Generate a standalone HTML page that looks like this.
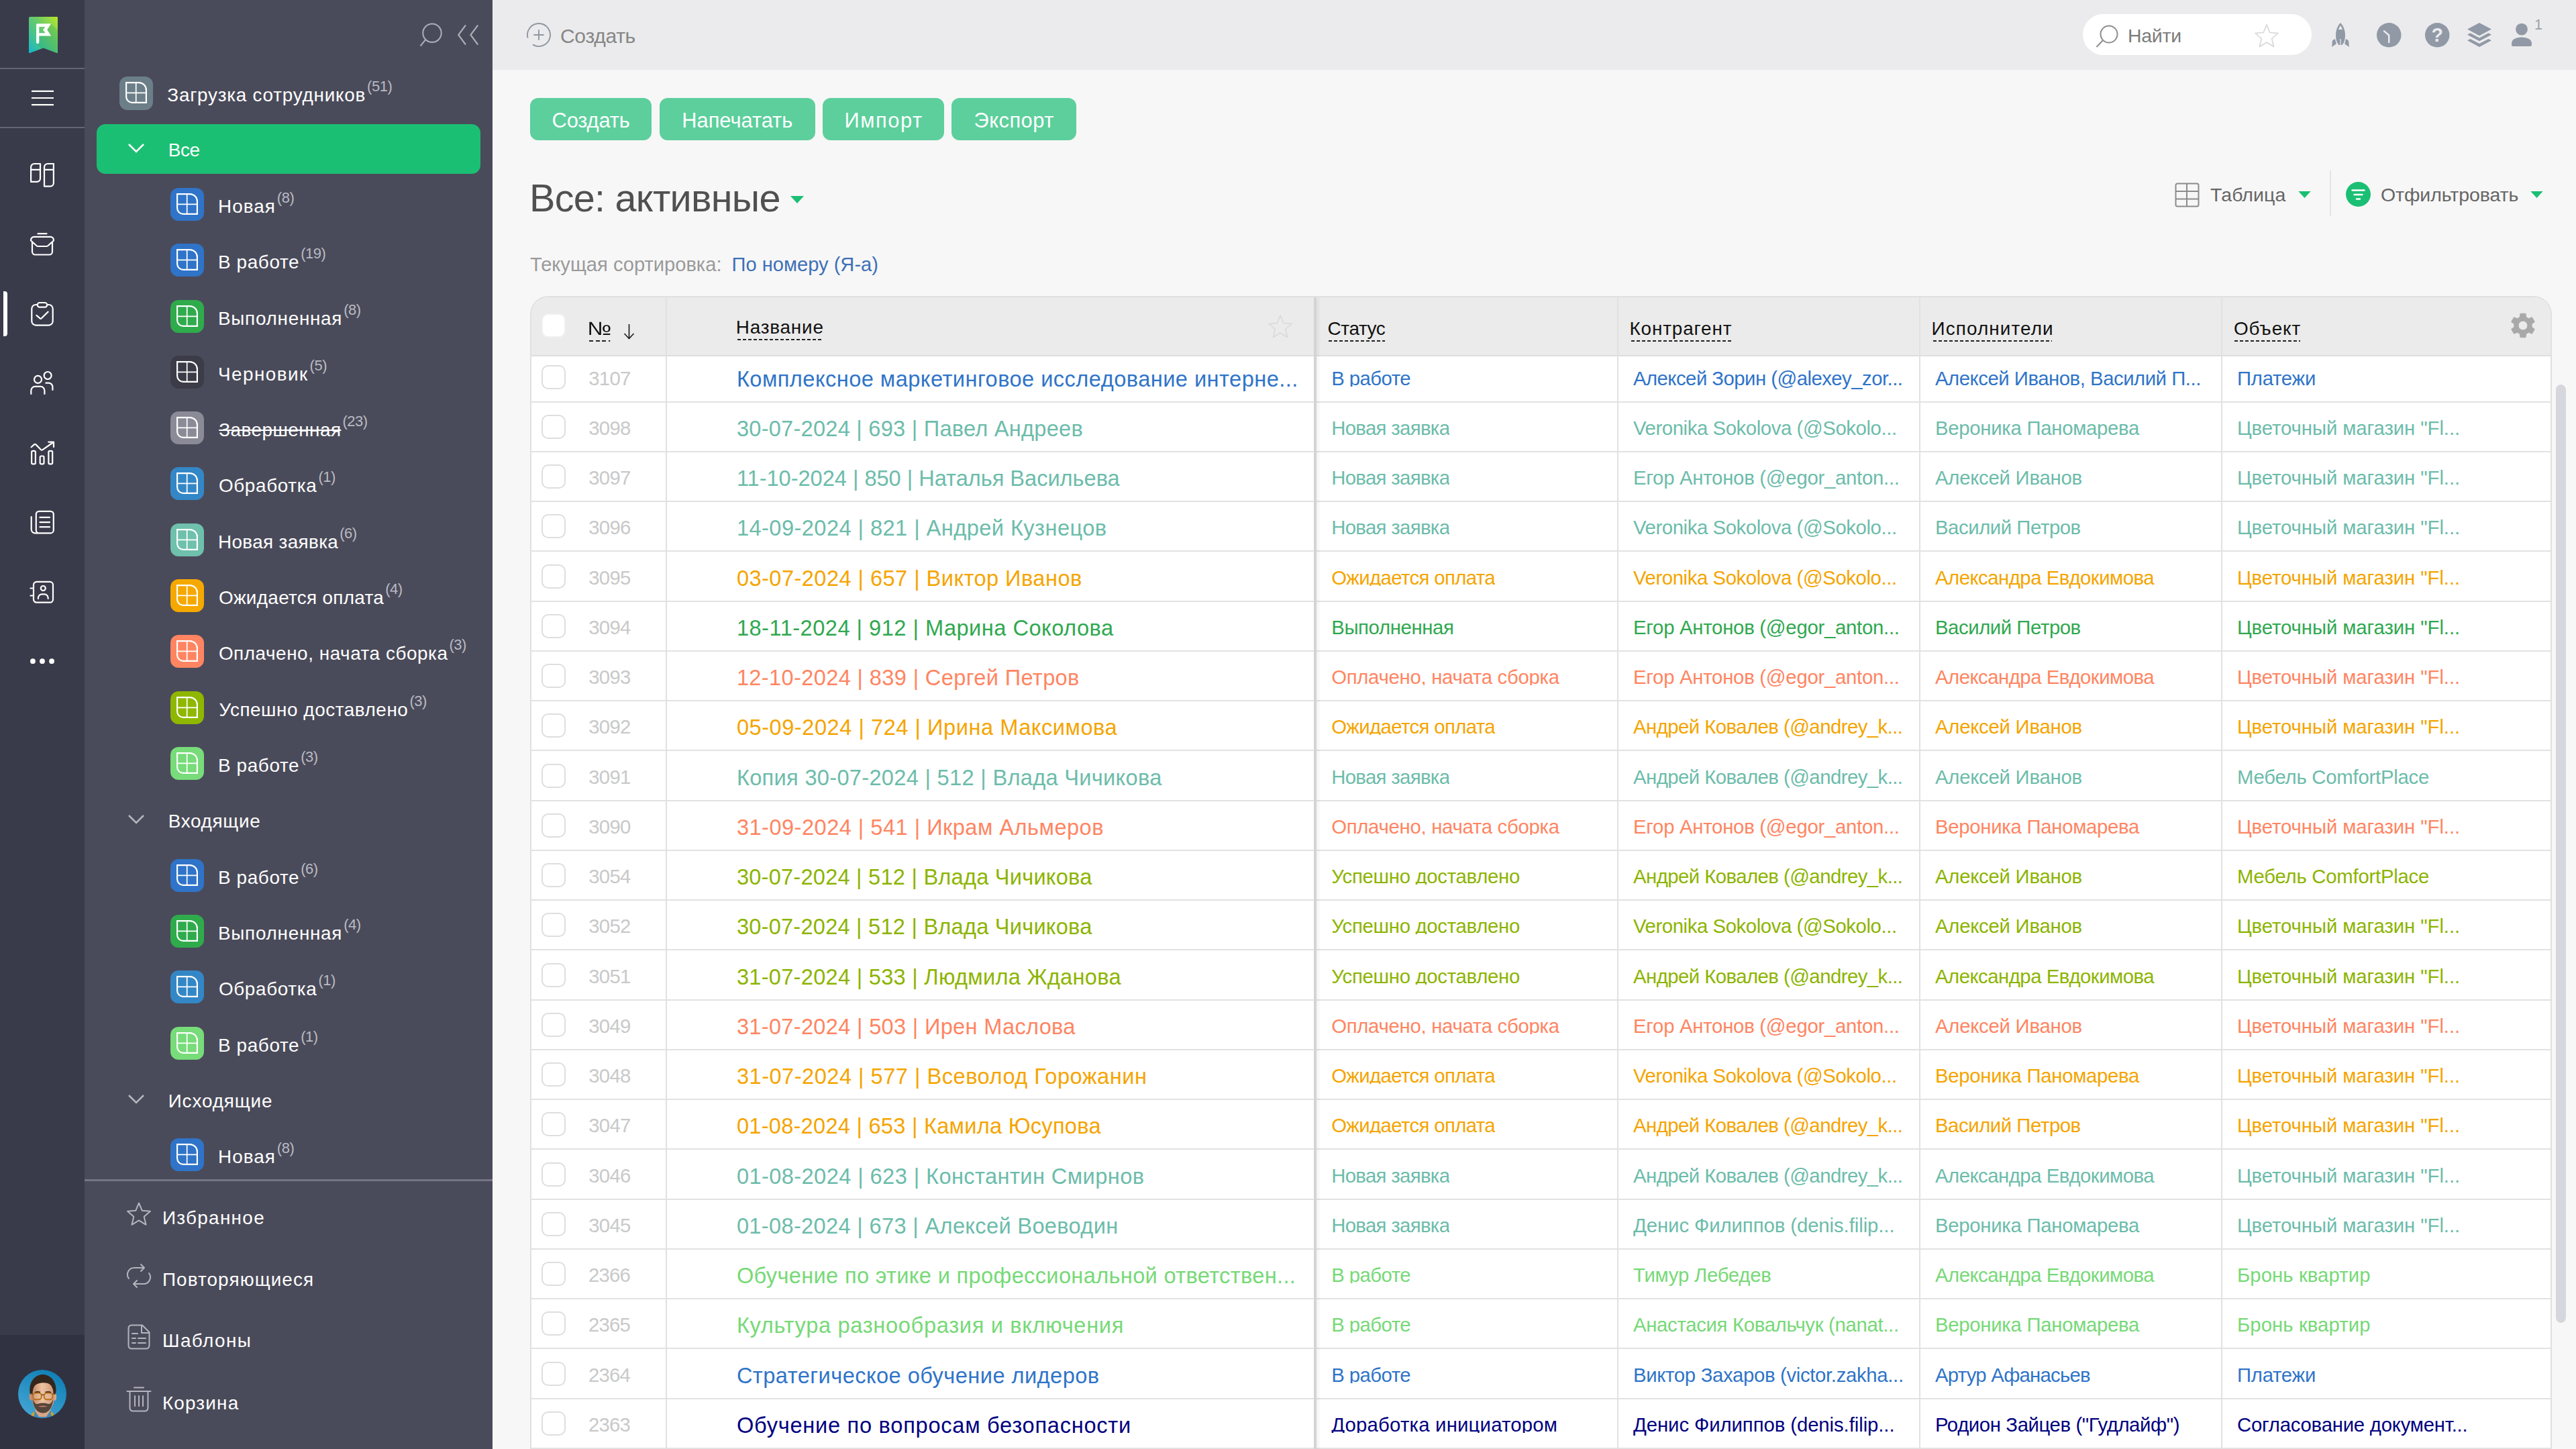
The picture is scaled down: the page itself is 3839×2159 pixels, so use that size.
<!DOCTYPE html>
<html lang="ru"><head><meta charset="utf-8"><title>Все: активные</title>
<style>
*{box-sizing:border-box;margin:0;padding:0}
html,body{width:3839px;height:2159px;overflow:hidden;background:#f7f7f7}
body{font-family:"Liberation Sans",sans-serif;position:relative;color:#444}
.abs{position:absolute}
#rail{position:absolute;left:0;top:0;width:126px;height:2159px;background:#3a3b4a}
#railb{position:absolute;left:0;top:1989px;width:126px;height:170px;background:#303241}
.rsep{position:absolute;left:0;width:126px;height:2px;background:#656675}
#side{position:absolute;left:126px;top:0;width:608px;height:2159px;background:#4a4b5a}
#side .sep{position:absolute;left:0;top:1757px;width:608px;height:3px;background:#757585}
.si{position:absolute;left:0;width:608px;height:50px;color:#fff;font-size:27.900px;line-height:50px;white-space:nowrap;letter-spacing:.4px}
.si .ib{position:absolute;left:128px;top:0;width:50px;height:49px;border-radius:12px}
.si .gi{position:absolute;left:9px;top:8px;width:32px;height:32px}
.si .t{position:absolute;left:201px;top:3px}
.si .t sup,.top .t sup{font-size:22px;color:#b9bac3;position:relative;top:-1px;left:2px;letter-spacing:-.5px;vertical-align:baseline;display:inline-block;transform:translateY(-14px)}
.si.g .t{left:127px}
.si .chev{position:absolute;left:65px;top:18px;width:24px;height:14px;color:#b4b5be}
.si.s .t span{text-decoration:line-through}
#act{position:absolute;left:18px;top:185px;width:572px;height:74px;border-radius:13px;background:#1bbf73}
.top{position:absolute;left:0;width:608px;height:50px;color:#fff;font-size:27.900px;line-height:50px;white-space:nowrap;letter-spacing:.4px}
.bi{position:absolute;left:0;width:608px;height:50px;color:#fff;font-size:27.900px;line-height:50px;white-space:nowrap;letter-spacing:.8px}
.bi .t{position:absolute;left:118px;top:1.500px}
.bi svg{position:absolute;left:62px;top:2px;width:38px;height:38px}
#topbar{position:absolute;left:734px;top:0;width:3105px;height:104px;background:#ebebed}
.btn{position:absolute;top:146px;height:63px;border-radius:12px;background:#5ccf9c;color:#fff;font-size:30.800px;line-height:67px;text-align:center;white-space:nowrap;letter-spacing:-.45px}
#title{position:absolute;left:789px;top:263px;font-size:57.500px;line-height:64px;color:#505050;white-space:nowrap;letter-spacing:-.7px}
#sort{position:absolute;left:790px;top:376px;font-size:29.100px;line-height:36px;color:#9a9a9a;white-space:nowrap;letter-spacing:0}
#sort b{font-weight:normal;color:#3d70b8;margin-left:7px}
#tbl{position:absolute;left:790px;top:441px;width:3013px;height:1718px;background:#fff;border:2px solid #e0e0e0;border-bottom:none;border-radius:27px 27px 0 0;overflow:hidden}
#thead{position:absolute;left:0;top:0;width:3011px;height:88px;background:#ebebeb;border-bottom:2px solid #dedede}
.th{position:absolute;top:27px;font-size:27.900px;line-height:36px;color:#111;white-space:nowrap;letter-spacing:.5px;height:37px;background:repeating-linear-gradient(90deg,#222 0,#222 5px,transparent 5px,transparent 8px) left bottom/100% 2px no-repeat}
.vl{position:absolute;top:0;width:2px;height:1718px;background:#e1e1e1}
.r{position:absolute;left:0;width:3011px;height:74px;white-space:nowrap}
.hl{position:absolute;left:0;width:3011px;height:2px;background:#e2e2e2}
.r span{position:absolute;top:2px;line-height:74px;font-size:29.300px;letter-spacing:-.45px}
.r .n{left:85px;color:#c9c9c9;letter-spacing:-.7px}
.r .a{left:306px;top:3px;font-size:32.600px;letter-spacing:.4px}
.r .b{left:1192px;letter-spacing:-.6px;height:49px;overflow:hidden}
.r .c{left:1642px;letter-spacing:-.6px}
.r .d{left:2092px}
.r .e{left:2543px}
.cb{position:absolute;left:15px;width:36px;height:36px;border:2px solid #dedede;border-radius:10px;background:#fff}
</style></head><body>

<div id="rail"><div id="railb"></div><div class="rsep" style="top:101px"></div><div class="rsep" style="top:189px"></div>
<svg class="abs" style="left:42.700px;top:24.800px;width:43.300px;height:54.300px" viewBox="0 0 43.300 54.300">
<defs><linearGradient id="lg" x1="1" y1="0" x2="0" y2="1"><stop offset="0" stop-color="#b8e82a"/><stop offset=".4" stop-color="#6ccb66"/><stop offset=".75" stop-color="#3bc19a"/><stop offset="1" stop-color="#12b6d0"/></linearGradient>
<clipPath id="lc"><path d="M1.800 0H41.500A1.800 1.800 0 0 1 43.300 1.800V53.300Q43.300 54.600 42 54.100L21.600 46.400L1.300 54.100Q0 54.600 0 53.300V1.800A1.800 1.800 0 0 1 1.800 0Z"/></clipPath></defs>
<g clip-path="url(#lc)"><rect width="43.300" height="54.300" fill="url(#lg)"/>
<path d="M33.200 10.250L43.300 20.350V60H31L11.500 40.500L15.300 38V28.400H33.200L27.300 19.250Z" fill="#1a9a6a" fill-opacity=".22"/></g>
<path d="M12.600 10.250H33.200L27.300 19.300L33.200 28.400H15.300V38.100A2.120 2.120 0 0 1 11.060 38.100V11.800A1.550 1.550 0 0 1 12.600 10.250Z M15.300 14.900V24.200H24.500L21 19.300L24.500 14.900Z" fill="#fff" fill-rule="evenodd"/>
</svg>
<svg class="abs" style="left:46.500px;top:134px;width:33px;height:24px" viewBox="0 0 34 24"><path d="M0 1.5H34M0 12H34M0 22.5H34" stroke="#fff" stroke-width="2.2" fill="none"/></svg>
<div class="abs" style="left:5px;top:434px;width:6px;height:67px;background:#fff;border-radius:0 4px 4px 0"></div>
<svg class="abs" style="left:44px;top:242px;width:38px;height:38px" viewBox="0 0 38 38"><path d="M2.100 28.900V7A5 5 0 0 1 7.100 2H16V23.900A5 5 0 0 1 11 28.900Z M2.100 10.900H16 M22 35.600V7A5 5 0 0 1 27 2H35.900V30.600A5 5 0 0 1 30.900 35.600Z M22 10.900H35.900" fill="none" stroke="#fff" stroke-width="2.2" stroke-linejoin="round" stroke-linecap="round"/></svg>
<svg class="abs" style="left:44px;top:346px;width:38px;height:36px" viewBox="0 0 38 36"><path d="M12.500 2.200H25.500 M2.100 12.500V11.400A4.500 4.500 0 0 1 6.600 6.900H31.400A4.500 4.500 0 0 1 35.900 11.400V12.500L27.400 20.200Q26.500 21 25.300 21H12.700Q11.500 21 10.600 20.200Z M4 14.500V29A4.500 4.500 0 0 0 8.500 33.500H29.500A4.500 4.500 0 0 0 34 29V14.500" fill="none" stroke="#fff" stroke-width="2.2" stroke-linejoin="round" stroke-linecap="round"/></svg>
<svg class="abs" style="left:45px;top:449px;width:36px;height:38px" viewBox="0 0 36 38"><path d="M10.700 5H8.300A6 6 0 0 0 2.300 11V29.600A6 6 0 0 0 8.300 35.600H27.700A6 6 0 0 0 33.700 29.600V11A6 6 0 0 0 27.700 5H25.200 M9.400 20.900L14.600 25.400Q15.700 26.300 16.800 25.300L26.600 15.600" fill="none" stroke="#fff" stroke-width="2.2" stroke-linejoin="round" stroke-linecap="round"/><rect x="10.700" y="2" width="14.500" height="6.600" rx="3.300" fill="none" stroke="#fff" stroke-width="2.2" stroke-linejoin="round" stroke-linecap="round"/></svg>
<svg class="abs" style="left:44px;top:552px;width:38px;height:37px" viewBox="0 0 38 37"><circle cx="12.500" cy="13.400" r="5.500" fill="none" stroke="#fff" stroke-width="2.2" stroke-linejoin="round" stroke-linecap="round"/><circle cx="27.100" cy="7.500" r="5.500" fill="none" stroke="#fff" stroke-width="2.2" stroke-linejoin="round" stroke-linecap="round"/><path d="M2.300 35.700V29.900A6 6 0 0 1 8.300 23.900H16.400A6 6 0 0 1 22.400 29.900V35.700 M23.500 18.600H28.400A6 6 0 0 1 34.400 24.600V29.800" fill="none" stroke="#fff" stroke-width="2.200" stroke-linejoin="round" stroke-linecap="butt"/></svg>
<svg class="abs" style="left:44px;top:656px;width:38px;height:38px" viewBox="0 0 38 38"><path d="M2.600 10.200L6.800 6.400Q8.300 5.200 9.700 6.600L17.200 14.200Q18.300 15.200 19.500 14.200L35.500 3 M28.300 2.600H36V10" fill="none" stroke="#fff" stroke-width="2.2" stroke-linejoin="round" stroke-linecap="round"/><rect x="3.100" y="15.800" width="5.800" height="19.500" rx="1.800" fill="none" stroke="#fff" stroke-width="2.2" stroke-linejoin="round" stroke-linecap="round"/><rect x="15.700" y="23.500" width="5.800" height="11.800" rx="1.800" fill="none" stroke="#fff" stroke-width="2.2" stroke-linejoin="round" stroke-linecap="round"/><rect x="28.400" y="15.800" width="5.800" height="19.500" rx="1.800" fill="none" stroke="#fff" stroke-width="2.2" stroke-linejoin="round" stroke-linecap="round"/></svg>
<svg class="abs" style="left:44px;top:759px;width:38px;height:38px" viewBox="0 0 38 38"><path d="M14.300 2.800H31.300A4.500 4.500 0 0 1 35.800 7.300V30.900A4.500 4.500 0 0 1 31.300 35.400H14.300A4.500 4.500 0 0 1 9.800 30.900V7.300A4.500 4.500 0 0 1 14.300 2.800Z M15.500 11.900H30 M15.500 19.100H30 M15.500 26.200H30 M2.700 11V30A5.400 5.400 0 0 0 8.100 35.400H14.300" fill="none" stroke="#fff" stroke-width="2.2" stroke-linejoin="round" stroke-linecap="round"/></svg>
<svg class="abs" style="left:44px;top:864px;width:38px;height:37px" viewBox="0 0 38 37"><path d="M10.500 2.900H30.500A4.500 4.500 0 0 1 35 7.400V29.200A4.500 4.500 0 0 1 30.500 33.700H10.500A4.500 4.500 0 0 1 6 29.200V7.400A4.500 4.500 0 0 1 10.500 2.900Z M1.500 12.500H6 M1.500 23.500H6 M12.900 28V27A5.700 5.700 0 0 1 18.600 21.300H22A5.700 5.700 0 0 1 27.700 27V28" fill="none" stroke="#fff" stroke-width="2.2" stroke-linejoin="round" stroke-linecap="round"/><circle cx="20.300" cy="12.500" r="3.500" fill="none" stroke="#fff" stroke-width="2.2" stroke-linejoin="round" stroke-linecap="round"/></svg>
<svg class="abs" style="left:44px;top:979px;width:38px;height:12px" viewBox="0 0 38 12"><circle cx="4.900" cy="6.200" r="3.900" fill="#fff"/><circle cx="19" cy="6.200" r="3.900" fill="#fff"/><circle cx="33.100" cy="6.200" r="3.900" fill="#fff"/></svg>
<svg class="abs" style="left:27px;top:2041px;width:72px;height:72px" viewBox="0 0 72 72"><defs><clipPath id="av"><circle cx="36" cy="36" r="36"/></clipPath>
<linearGradient id="avb" x1=".7" y1="0" x2=".2" y2="1"><stop offset="0" stop-color="#0f7fb4"/><stop offset="1" stop-color="#46a6d6"/></linearGradient>
<linearGradient id="avs" x1="0" y1="0" x2="1" y2="0"><stop offset="0" stop-color="#c08462"/><stop offset=".45" stop-color="#eec3a1"/><stop offset="1" stop-color="#cf9672"/></linearGradient>
<filter id="avf" x="-10%" y="-10%" width="120%" height="120%"><feGaussianBlur stdDeviation=".7"/></filter></defs>
<g clip-path="url(#av)"><rect width="72" height="72" fill="url(#avb)"/>
<g filter="url(#avf)">
<path d="M19 72L23 64L27 60H46L50 63L54 72Z" fill="#3f86bd"/>
<path d="M19.500 67L23.500 62L24.500 66L22 72H18Z M53 66L49.500 61.500L48.500 65L51 72H55Z" fill="#d9a11f"/>
<path d="M25.500 52H48.500V60L42 70H31L25.500 62Z" fill="#d7a585"/>
<ellipse cx="18.800" cy="40.500" rx="2.300" ry="5.500" fill="#c98d6c"/><ellipse cx="54.800" cy="40.500" rx="2.300" ry="5.500" fill="#dba686"/>
<path d="M21 30C21 18 28 13 37 13S53 19 53.500 30V44C53.500 55 45 64 37 64S21 55 21 44Z" fill="url(#avs)"/>
<path d="M18 36C15 22 22 8 36 7C47 6.500 56 16 56.500 28C56.800 32 56 35 55 37L52.500 36C53 29 50 22 44 20C38 18.500 30 19 25.500 23C22.500 26 21.500 31 21.500 36Z" fill="#35261f"/>
<path d="M22 44C22 52 26 64 37 64.500C47 64.500 52 53 52 44C50 50 47 52 44 50.500C41 49 33 49 30 50.500C27 52 24 50 22 44Z" fill="#54443b"/>
<path d="M29.500 54.500Q37 52.500 44 54.500Q37 56.500 29.500 54.500Z" fill="#c77b6a"/>
<rect x="22.200" y="34.500" width="12.600" height="9.800" rx="4.200" fill="#f1c9a4" fill-opacity=".35" stroke="#b8701f" stroke-width="1.900"/><rect x="38.800" y="34.500" width="12.600" height="9.800" rx="4.200" fill="#f1c9a4" fill-opacity=".35" stroke="#b8701f" stroke-width="1.900"/><path d="M34.800 37.500Q36.800 36.300 38.800 37.500 M22.200 36.500L19 35.500 M51.400 36.500L54.500 35.500" stroke="#8a4f1a" stroke-width="1.500" fill="none"/>
<path d="M25 33.600Q29 32 33 33.400 M40.500 33.400Q45 32 49 33.600" stroke="#2f221c" stroke-width="1.400" fill="none"/>
</g></g></svg>
</div>
<div id="side">
<svg class="abs" style="left:498px;top:33px;width:36px;height:38px" viewBox="0 0 36 38"><circle cx="20" cy="16.200" r="13.700" fill="none" stroke="#abacb5" stroke-width="2.100"/><path d="M10.300 25.900L2.600 35.500" stroke="#abacb5" stroke-width="2.100" fill="none"/></svg>
<svg class="abs" style="left:555px;top:36px;width:33px;height:32px" viewBox="0 0 33 32"><path d="M13 1.500L2.200 16L13 30.500M31.200 1.500L20.400 16L31.200 30.500" fill="none" stroke="#abacb5" stroke-width="2.100" stroke-linejoin="round"/></svg>
<div id="act"></div>
<div class="top" style="top:114px"><div class="abs" style="left:52px;top:0;width:50px;height:50px;border-radius:12px;background:#6c7f88"><svg class="abs" style="left:9px;top:8px;width:32px;height:32px" viewBox="0 0 32 32"><path d="M1.100 1.100H20A10.900 10.900 0 0 1 30.900 12V30.900H10A8.900 8.900 0 0 1 1.100 22Z" fill="none" stroke="#fff" stroke-width="2.200"/><path d="M15.700 1V31 M1 16.300H31" fill="none" stroke="#fff" stroke-width="1.700"/></svg></div><span class="t abs" style="left:123.3px;top:3px;letter-spacing:0.75px">Загрузка сотрудников<sup>(51)</sup></span></div>
<div class="si g" style="top:196px"><span style="color:#fff"><svg class="chev" style="color:#fff" viewBox="0 0 24 14"><path d="M1 1L12 12L23 1" fill="none" stroke="currentColor" stroke-width="2.6"/></svg></span><span class="t" style="left:124.8px;letter-spacing:-0.42px">Все</span></div>
<div class="si" style="top:280px"><div class="ib" style="background:#2f74c8"><svg class="gi" viewBox="0 0 32 32"><path d="M1.100 1.100H20A10.900 10.900 0 0 1 30.900 12V30.900H10A8.900 8.900 0 0 1 1.100 22Z" fill="none" stroke="#fff" stroke-width="2.200"/><path d="M15.700 1V31 M1 16.300H31" fill="none" stroke="#fff" stroke-width="1.700"/></svg></div><span class="t" style="left:199.0px;letter-spacing:1.01px"><span>Новая</span><sup>(8)</sup></span></div>
<div class="si" style="top:363px"><div class="ib" style="background:#2f74c8"><svg class="gi" viewBox="0 0 32 32"><path d="M1.100 1.100H20A10.900 10.900 0 0 1 30.900 12V30.900H10A8.900 8.900 0 0 1 1.100 22Z" fill="none" stroke="#fff" stroke-width="2.200"/><path d="M15.700 1V31 M1 16.300H31" fill="none" stroke="#fff" stroke-width="1.700"/></svg></div><span class="t" style="left:199.0px;letter-spacing:0.62px"><span>В работе</span><sup>(19)</sup></span></div>
<div class="si" style="top:447px"><div class="ib" style="background:#2fab4c"><svg class="gi" viewBox="0 0 32 32"><path d="M1.100 1.100H20A10.900 10.900 0 0 1 30.900 12V30.900H10A8.900 8.900 0 0 1 1.100 22Z" fill="none" stroke="#fff" stroke-width="2.200"/><path d="M15.700 1V31 M1 16.300H31" fill="none" stroke="#fff" stroke-width="1.700"/></svg></div><span class="t" style="left:199.0px;letter-spacing:0.72px"><span>Выполненная</span><sup>(8)</sup></span></div>
<div class="si" style="top:530px"><div class="ib" style="background:#3b3c47"><svg class="gi" viewBox="0 0 32 32"><path d="M1.100 1.100H20A10.900 10.900 0 0 1 30.900 12V30.900H10A8.900 8.900 0 0 1 1.100 22Z" fill="none" stroke="#fff" stroke-width="2.200"/><path d="M15.700 1V31 M1 16.300H31" fill="none" stroke="#fff" stroke-width="1.700"/></svg></div><span class="t" style="left:199.0px;letter-spacing:1.43px"><span>Черновик</span><sup>(5)</sup></span></div>
<div class="si s" style="top:613px"><div class="ib" style="background:#8a8b96"><svg class="gi" viewBox="0 0 32 32"><path d="M1.100 1.100H20A10.900 10.900 0 0 1 30.900 12V30.900H10A8.900 8.900 0 0 1 1.100 22Z" fill="none" stroke="#fff" stroke-width="2.200"/><path d="M15.700 1V31 M1 16.300H31" fill="none" stroke="#fff" stroke-width="1.700"/></svg></div><span class="t" style="left:200.3px;letter-spacing:0.45px"><span>Завершенная</span><sup>(23)</sup></span></div>
<div class="si" style="top:696px"><div class="ib" style="background:#3487c6"><svg class="gi" viewBox="0 0 32 32"><path d="M1.100 1.100H20A10.900 10.900 0 0 1 30.900 12V30.900H10A8.900 8.900 0 0 1 1.100 22Z" fill="none" stroke="#fff" stroke-width="2.200"/><path d="M15.700 1V31 M1 16.300H31" fill="none" stroke="#fff" stroke-width="1.700"/></svg></div><span class="t" style="left:199.9px;letter-spacing:0.65px"><span>Обработка</span><sup>(1)</sup></span></div>
<div class="si" style="top:780px"><div class="ib" style="background:#6fc0ac"><svg class="gi" viewBox="0 0 32 32"><path d="M1.100 1.100H20A10.900 10.900 0 0 1 30.900 12V30.900H10A8.900 8.900 0 0 1 1.100 22Z" fill="none" stroke="#fff" stroke-width="2.200"/><path d="M15.700 1V31 M1 16.300H31" fill="none" stroke="#fff" stroke-width="1.700"/></svg></div><span class="t" style="left:199.0px;letter-spacing:0.34px"><span>Новая заявка</span><sup>(6)</sup></span></div>
<div class="si" style="top:863px"><div class="ib" style="background:#f5a800"><svg class="gi" viewBox="0 0 32 32"><path d="M1.100 1.100H20A10.900 10.900 0 0 1 30.900 12V30.900H10A8.900 8.900 0 0 1 1.100 22Z" fill="none" stroke="#fff" stroke-width="2.200"/><path d="M15.700 1V31 M1 16.300H31" fill="none" stroke="#fff" stroke-width="1.700"/></svg></div><span class="t" style="left:199.9px;letter-spacing:0.31px"><span>Ожидается оплата</span><sup>(4)</sup></span></div>
<div class="si" style="top:946px"><div class="ib" style="background:#ff8562"><svg class="gi" viewBox="0 0 32 32"><path d="M1.100 1.100H20A10.900 10.900 0 0 1 30.900 12V30.900H10A8.900 8.900 0 0 1 1.100 22Z" fill="none" stroke="#fff" stroke-width="2.200"/><path d="M15.700 1V31 M1 16.300H31" fill="none" stroke="#fff" stroke-width="1.700"/></svg></div><span class="t" style="left:199.9px;letter-spacing:0.54px"><span>Оплачено, начата сборка</span><sup>(3)</sup></span></div>
<div class="si" style="top:1030px"><div class="ib" style="background:#8fb700"><svg class="gi" viewBox="0 0 32 32"><path d="M1.100 1.100H20A10.900 10.900 0 0 1 30.900 12V30.900H10A8.900 8.900 0 0 1 1.100 22Z" fill="none" stroke="#fff" stroke-width="2.200"/><path d="M15.700 1V31 M1 16.300H31" fill="none" stroke="#fff" stroke-width="1.700"/></svg></div><span class="t" style="left:200.5px;letter-spacing:0.55px"><span>Успешно доставлено</span><sup>(3)</sup></span></div>
<div class="si" style="top:1113px"><div class="ib" style="background:#77dc79"><svg class="gi" viewBox="0 0 32 32"><path d="M1.100 1.100H20A10.900 10.900 0 0 1 30.900 12V30.900H10A8.900 8.900 0 0 1 1.100 22Z" fill="none" stroke="#fff" stroke-width="2.200"/><path d="M15.700 1V31 M1 16.300H31" fill="none" stroke="#fff" stroke-width="1.700"/></svg></div><span class="t" style="left:199.0px;letter-spacing:0.62px"><span>В работе</span><sup>(3)</sup></span></div>
<div class="si g" style="top:1196px"><svg class="chev" viewBox="0 0 24 14"><path d="M1 1L12 12L23 1" fill="none" stroke="currentColor" stroke-width="2.6"/></svg><span class="t" style="left:124.7px;letter-spacing:0.68px">Входящие</span></div>
<div class="si" style="top:1280px"><div class="ib" style="background:#2f74c8"><svg class="gi" viewBox="0 0 32 32"><path d="M1.100 1.100H20A10.900 10.900 0 0 1 30.900 12V30.900H10A8.900 8.900 0 0 1 1.100 22Z" fill="none" stroke="#fff" stroke-width="2.200"/><path d="M15.700 1V31 M1 16.300H31" fill="none" stroke="#fff" stroke-width="1.700"/></svg></div><span class="t" style="left:199.0px;letter-spacing:0.62px"><span>В работе</span><sup>(6)</sup></span></div>
<div class="si" style="top:1363px"><div class="ib" style="background:#2fab4c"><svg class="gi" viewBox="0 0 32 32"><path d="M1.100 1.100H20A10.900 10.900 0 0 1 30.900 12V30.900H10A8.900 8.900 0 0 1 1.100 22Z" fill="none" stroke="#fff" stroke-width="2.200"/><path d="M15.700 1V31 M1 16.300H31" fill="none" stroke="#fff" stroke-width="1.700"/></svg></div><span class="t" style="left:199.0px;letter-spacing:0.72px"><span>Выполненная</span><sup>(4)</sup></span></div>
<div class="si" style="top:1446px"><div class="ib" style="background:#3487c6"><svg class="gi" viewBox="0 0 32 32"><path d="M1.100 1.100H20A10.900 10.900 0 0 1 30.900 12V30.900H10A8.900 8.900 0 0 1 1.100 22Z" fill="none" stroke="#fff" stroke-width="2.200"/><path d="M15.700 1V31 M1 16.300H31" fill="none" stroke="#fff" stroke-width="1.700"/></svg></div><span class="t" style="left:199.9px;letter-spacing:0.65px"><span>Обработка</span><sup>(1)</sup></span></div>
<div class="si" style="top:1530px"><div class="ib" style="background:#77dc79"><svg class="gi" viewBox="0 0 32 32"><path d="M1.100 1.100H20A10.900 10.900 0 0 1 30.900 12V30.900H10A8.900 8.900 0 0 1 1.100 22Z" fill="none" stroke="#fff" stroke-width="2.200"/><path d="M15.700 1V31 M1 16.300H31" fill="none" stroke="#fff" stroke-width="1.700"/></svg></div><span class="t" style="left:199.0px;letter-spacing:0.62px"><span>В работе</span><sup>(1)</sup></span></div>
<div class="si g" style="top:1613px"><svg class="chev" viewBox="0 0 24 14"><path d="M1 1L12 12L23 1" fill="none" stroke="currentColor" stroke-width="2.6"/></svg><span class="t" style="left:124.7px;letter-spacing:0.87px">Исходящие</span></div>
<div class="si" style="top:1696px"><div class="ib" style="background:#2f74c8"><svg class="gi" viewBox="0 0 32 32"><path d="M1.100 1.100H20A10.900 10.900 0 0 1 30.900 12V30.900H10A8.900 8.900 0 0 1 1.100 22Z" fill="none" stroke="#fff" stroke-width="2.200"/><path d="M15.700 1V31 M1 16.300H31" fill="none" stroke="#fff" stroke-width="1.700"/></svg></div><span class="t" style="left:199.0px;letter-spacing:1.01px"><span>Новая</span><sup>(8)</sup></span></div>
<div class="sep"></div>
<div class="bi" style="top:1788px"><svg viewBox="0 0 38 38"><path d="M19 2.500L23.800 13.800L36 14.800L26.700 22.800L29.500 34.800L19 28.400L8.500 34.800L11.300 22.800L2 14.800L14.200 13.800Z" fill="none" stroke="#b3b4bd" stroke-width="2" stroke-linejoin="round" stroke-linecap="round"/></svg><span class="t" style="left:115.9px;letter-spacing:1.30px">Избранное</span></div>
<div class="bi" style="top:1880px"><svg viewBox="0 0 38 38"><path d="M22 2L27 7L22 12 M27 7H12A10 10 0 0 0 4 23 M16 36L11 31L16 26 M11 31H26A10 10 0 0 0 34 15" fill="none" stroke="#b3b4bd" stroke-width="2" stroke-linejoin="round" stroke-linecap="round"/></svg><span class="t" style="left:115.9px;letter-spacing:1.10px">Повторяющиеся</span></div>
<div class="bi" style="top:1971px"><svg viewBox="0 0 38 38"><path d="M8 1.500H24L34.500 12V32A4.500 4.500 0 0 1 30 36.500H8A4.500 4.500 0 0 1 3.500 32V6A4.500 4.500 0 0 1 8 1.500Z M23 2V13H34 M9 14H17 M9 21H14 M18 21H29 M9 28H14 M18 28H29" fill="none" stroke="#b3b4bd" stroke-width="2" stroke-linejoin="round" stroke-linecap="round"/></svg><span class="t" style="left:115.9px;letter-spacing:1.44px">Шаблоны</span></div>
<div class="bi" style="top:2064px"><svg viewBox="0 0 38 38"><path d="M12 1.500H26 M1.500 7H36.500 M5.500 7V32A4.500 4.500 0 0 0 10 36.500H28A4.500 4.500 0 0 0 32.500 32V7 M13 14V29 M19 14V29 M25 14V29" fill="none" stroke="#b3b4bd" stroke-width="2" stroke-linejoin="round" stroke-linecap="round"/></svg><span class="t" style="left:115.9px;letter-spacing:1.17px">Корзина</span></div>
</div>
<div id="topbar">
<svg class="abs" style="left:51px;top:34px;width:36px;height:36px" viewBox="0 0 36 36"><path d="M1.580 22.400A17 17 0 1 1 9 32.420" fill="none" stroke="#8f97a1" stroke-width="1.900"/><path d="M18 10.300V25.700M10.300 18H25.700" stroke="#8f97a1" stroke-width="1.900"/></svg>
<div class="abs" style="left:101px;top:32px;font-size:30px;line-height:44px;color:#868686;letter-spacing:-.3px">Создать</div>
<div class="abs" style="left:2370px;top:21px;width:341px;height:61px;border-radius:31px;background:#fff"></div>
<svg class="abs" style="left:2389px;top:36px;width:34px;height:36px" viewBox="0 0 34 36"><circle cx="20" cy="15" r="12.500" fill="none" stroke="#8d8d8d" stroke-width="2"/><path d="M11 24L1.500 34" stroke="#8d8d8d" stroke-width="2"/></svg>
<div class="abs" style="left:2437px;top:31px;font-size:28.500px;line-height:44px;color:#7c7c7c;letter-spacing:-.3px">Найти</div>
<svg class="abs" style="left:2625px;top:35px;width:38px;height:37px" viewBox="0 0 38 37"><path d="M19 2L23.800 13.500L36 14.500L26.700 22.500L29.500 34.500L19 28.100L8.500 34.500L11.300 22.500L2 14.500L14.200 13.500Z" fill="none" stroke="#d6d6d9" stroke-width="1.600" stroke-linejoin="round"/></svg>
<svg class="abs" style="left:2741px;top:34px;width:26px;height:36px" viewBox="0 0 26 36"><path d="M13 0C17.500 4.500 20 11 20 19C20 25 18.500 29.500 15.500 33H10.500C7.500 29.500 6 25 6 19C6 11 8.500 4.500 13 0Z" fill="#9199a6"/><path d="M13 3.800L16.200 10H9.800Z M12.400 24H13.600V33H12.400Z" fill="#ebebed"/><path d="M0.200 36L0.700 28Q1.200 25 5 24.300L6.800 31.200Z M25.800 36L25.300 28Q24.800 25 21 24.300L19.200 31.200Z" fill="#9199a6"/></svg>
<svg class="abs" style="left:2808px;top:34px;width:36.500px;height:36.500px" viewBox="0 0 37 37"><circle cx="18.500" cy="18.500" r="18.500" fill="#9199a6"/><path d="M11.200 12.600L18.500 18.800V29.300" fill="none" stroke="#ebebed" stroke-width="2.500" stroke-linecap="round" stroke-linejoin="round"/></svg>
<svg class="abs" style="left:2880px;top:34px;width:36.500px;height:36.500px" viewBox="0 0 37 37"><circle cx="18.500" cy="18.500" r="18.500" fill="#9199a6"/><text x="18.500" y="28.800" font-family="Liberation Sans,sans-serif" font-weight="bold" font-size="29" text-anchor="middle" fill="#ebebed">?</text></svg>
<svg class="abs" style="left:2943px;top:34px;width:36px;height:36px" viewBox="0 0 36 36"><path d="M18 0L36 9.600L18 19.200L0 9.600Z M4.500 15.300L0 17.700L18 27.300L36 17.700L31.500 15.300L18 22.500Z M4.500 23.900L0 26.300L18 36L36 26.300L31.500 23.900L18 31.100Z" fill="#9199a6"/></svg>
<svg class="abs" style="left:3009px;top:34px;width:30px;height:35px" viewBox="0 0 30 35"><circle cx="15" cy="9.600" r="8.900" fill="#9199a6"/><path d="M0 31C0 25 6 21.500 15 21.500S30 25 30 31V32.500A2.500 2.500 0 0 1 27.500 35H2.500A2.500 2.500 0 0 1 0 32.500Z" fill="#9199a6"/></svg>
<div class="abs" style="left:3043px;top:25px;font-size:21.500px;line-height:24px;color:#9aa0ab">1</div>
</div>
<div class="btn" style="left:790px;width:181px;text-align:left;text-indent:32.6px;letter-spacing:-0.16px">Создать</div>
<div class="btn" style="left:983px;width:232px;text-align:left;text-indent:33.3px;letter-spacing:-0.01px">Напечатать</div>
<div class="btn" style="left:1226px;width:181px;text-align:left;text-indent:32.6px;letter-spacing:1.58px">Импорт</div>
<div class="btn" style="left:1418px;width:186px;text-align:left;text-indent:33.6px;letter-spacing:0.50px">Экспорт</div>
<div id="title">Все: активные</div>
<svg class="abs" style="left:1178px;top:292px;width:20px;height:12px" viewBox="0 0 20 12"><path d="M0 0H20L10 11Z" fill="#1bbf73"/></svg>
<div id="sort">Текущая сортировка: <b>По номеру (Я-а)</b></div>
<svg class="abs" style="left:3241px;top:272px;width:37px;height:37px" viewBox="0 0 37 37"><path d="M4 1.500H33A2.500 2.500 0 0 1 35.500 4V33A2.500 2.500 0 0 1 33 35.500H4A2.500 2.500 0 0 1 1.500 33V4A2.500 2.500 0 0 1 4 1.500Z M18 1.500V35.500 M1.500 13H35.500 M1.500 24.500H35.500" fill="none" stroke="#8c8c8c" stroke-width="2"/></svg>
<div class="abs" style="left:3294px;top:268px;font-size:28.500px;line-height:44px;color:#666;letter-spacing:.1px">Таблица</div>
<svg class="abs" style="left:3425px;top:285px;width:19px;height:11px" viewBox="0 0 20 12"><path d="M0 0H20L10 11Z" fill="#1bbf73"/></svg>
<div class="abs" style="left:3472px;top:254px;width:2px;height:68px;background:#e4e4e6"></div>
<svg class="abs" style="left:3496px;top:271px;width:37px;height:37px" viewBox="0 0 37 37"><circle cx="18.500" cy="18.500" r="18.500" fill="#1bbf73"/><path d="M9.500 12.500H27.500M12.500 19H24.500M16 25.500H21" stroke="#fff" stroke-width="2.400" stroke-linecap="round"/></svg>
<div class="abs" style="left:3548px;top:268px;font-size:28.500px;line-height:44px;color:#666;letter-spacing:-.1px">Отфильтровать</div>
<svg class="abs" style="left:3771px;top:285px;width:19px;height:11px" viewBox="0 0 20 12"><path d="M0 0H20L10 11Z" fill="#1bbf73"/></svg>
<div id="tbl">
<div class="r" style="top:82px;color:#2f74c8"><div class="cb" style="top:19px"></div><span class="n" style="left:85.3px;letter-spacing:-0.75px">3107</span><span class="a" style="left:305.9px;letter-spacing:0.46px">Комплексное маркетинговое исследование интерне...</span><span class="b" style="left:1192.2px;letter-spacing:-0.54px">В работе</span><span class="c" style="left:1642.0px;letter-spacing:-0.52px">Алексей Зорин (@alexey_zor...</span><span class="d" style="left:2092.0px;letter-spacing:-0.46px">Алексей Иванов, Василий П...</span><span class="e" style="left:2542.0px;letter-spacing:-0.26px">Платежи</span></div>
<div class="r" style="top:156px;color:#6cbcaa"><div class="cb" style="top:19px"></div><span class="n" style="left:85.3px;letter-spacing:-0.75px">3098</span><span class="a" style="left:305.9px;letter-spacing:0.25px">30-07-2024 | 693 | Павел Андреев</span><span class="b" style="left:1192.2px;letter-spacing:-0.65px">Новая заявка</span><span class="c" style="left:1642.0px;letter-spacing:-0.40px">Veronika Sokolova (@Sokolo...</span><span class="d" style="left:2092.0px;letter-spacing:-0.27px">Вероника Паномарева</span><span class="e" style="left:2542.0px;letter-spacing:-0.07px">Цветочный магазин "Fl...</span></div>
<div class="r" style="top:230px;color:#6cbcaa"><div class="cb" style="top:19px"></div><span class="n" style="left:85.3px;letter-spacing:-0.75px">3097</span><span class="a" style="left:305.9px;letter-spacing:-0.02px">11-10-2024 | 850 | Наталья Васильева</span><span class="b" style="left:1192.2px;letter-spacing:-0.65px">Новая заявка</span><span class="c" style="left:1642.0px;letter-spacing:-0.25px">Егор Антонов (@egor_anton...</span><span class="d" style="left:2092.0px;letter-spacing:-0.24px">Алексей Иванов</span><span class="e" style="left:2542.0px;letter-spacing:-0.07px">Цветочный магазин "Fl...</span></div>
<div class="r" style="top:304px;color:#6cbcaa"><div class="cb" style="top:19px"></div><span class="n" style="left:85.3px;letter-spacing:-0.75px">3096</span><span class="a" style="left:305.9px;letter-spacing:0.45px">14-09-2024 | 821 | Андрей Кузнецов</span><span class="b" style="left:1192.2px;letter-spacing:-0.65px">Новая заявка</span><span class="c" style="left:1642.0px;letter-spacing:-0.40px">Veronika Sokolova (@Sokolo...</span><span class="d" style="left:2092.0px;letter-spacing:-0.43px">Василий Петров</span><span class="e" style="left:2542.0px;letter-spacing:-0.07px">Цветочный магазин "Fl...</span></div>
<div class="r" style="top:379px;color:#f5a400"><div class="cb" style="top:19px"></div><span class="n" style="left:85.3px;letter-spacing:-0.75px">3095</span><span class="a" style="left:305.9px;letter-spacing:0.45px">03-07-2024 | 657 | Виктор Иванов</span><span class="b" style="left:1192.2px;letter-spacing:-0.61px">Ожидается оплата</span><span class="c" style="left:1642.0px;letter-spacing:-0.40px">Veronika Sokolova (@Sokolo...</span><span class="d" style="left:2092.0px;letter-spacing:-0.49px">Александра Евдокимова</span><span class="e" style="left:2542.0px;letter-spacing:-0.07px">Цветочный магазин "Fl...</span></div>
<div class="r" style="top:453px;color:#2fa84f"><div class="cb" style="top:19px"></div><span class="n" style="left:85.3px;letter-spacing:-0.75px">3094</span><span class="a" style="left:305.9px;letter-spacing:0.49px">18-11-2024 | 912 | Марина Соколова</span><span class="b" style="left:1192.2px;letter-spacing:-0.35px">Выполненная</span><span class="c" style="left:1642.0px;letter-spacing:-0.25px">Егор Антонов (@egor_anton...</span><span class="d" style="left:2092.0px;letter-spacing:-0.43px">Василий Петров</span><span class="e" style="left:2542.0px;letter-spacing:-0.07px">Цветочный магазин "Fl...</span></div>
<div class="r" style="top:527px;color:#ff8562"><div class="cb" style="top:19px"></div><span class="n" style="left:85.3px;letter-spacing:-0.75px">3093</span><span class="a" style="left:305.9px;letter-spacing:0.36px">12-10-2024 | 839 | Сергей Петров</span><span class="b" style="left:1192.2px;letter-spacing:-0.27px">Оплачено, начата сборка</span><span class="c" style="left:1642.0px;letter-spacing:-0.25px">Егор Антонов (@egor_anton...</span><span class="d" style="left:2092.0px;letter-spacing:-0.49px">Александра Евдокимова</span><span class="e" style="left:2542.0px;letter-spacing:-0.07px">Цветочный магазин "Fl...</span></div>
<div class="r" style="top:601px;color:#f5a400"><div class="cb" style="top:19px"></div><span class="n" style="left:85.3px;letter-spacing:-0.75px">3092</span><span class="a" style="left:305.9px;letter-spacing:0.53px">05-09-2024 | 724 | Ирина Максимова</span><span class="b" style="left:1192.2px;letter-spacing:-0.61px">Ожидается оплата</span><span class="c" style="left:1642.0px;letter-spacing:-0.53px">Андрей Ковалев (@andrey_k...</span><span class="d" style="left:2092.0px;letter-spacing:-0.24px">Алексей Иванов</span><span class="e" style="left:2542.0px;letter-spacing:-0.07px">Цветочный магазин "Fl...</span></div>
<div class="r" style="top:676px;color:#6cbcaa"><div class="cb" style="top:19px"></div><span class="n" style="left:85.3px;letter-spacing:-0.75px">3091</span><span class="a" style="left:305.9px;letter-spacing:0.31px">Копия 30-07-2024 | 512 | Влада Чичикова</span><span class="b" style="left:1192.2px;letter-spacing:-0.65px">Новая заявка</span><span class="c" style="left:1642.0px;letter-spacing:-0.53px">Андрей Ковалев (@andrey_k...</span><span class="d" style="left:2092.0px;letter-spacing:-0.24px">Алексей Иванов</span><span class="e" style="left:2542.0px;letter-spacing:-0.23px">Мебель ComfortPlace</span></div>
<div class="r" style="top:750px;color:#ff8562"><div class="cb" style="top:19px"></div><span class="n" style="left:85.3px;letter-spacing:-0.75px">3090</span><span class="a" style="left:305.9px;letter-spacing:0.48px">31-09-2024 | 541 | Икрам Альмеров</span><span class="b" style="left:1192.2px;letter-spacing:-0.27px">Оплачено, начата сборка</span><span class="c" style="left:1642.0px;letter-spacing:-0.25px">Егор Антонов (@egor_anton...</span><span class="d" style="left:2092.0px;letter-spacing:-0.27px">Вероника Паномарева</span><span class="e" style="left:2542.0px;letter-spacing:-0.07px">Цветочный магазин "Fl...</span></div>
<div class="r" style="top:824px;color:#8cb400"><div class="cb" style="top:19px"></div><span class="n" style="left:85.3px;letter-spacing:-0.75px">3054</span><span class="a" style="left:305.9px;letter-spacing:0.23px">30-07-2024 | 512 | Влада Чичикова</span><span class="b" style="left:1192.2px;letter-spacing:-0.28px">Успешно доставлено</span><span class="c" style="left:1642.0px;letter-spacing:-0.53px">Андрей Ковалев (@andrey_k...</span><span class="d" style="left:2092.0px;letter-spacing:-0.24px">Алексей Иванов</span><span class="e" style="left:2542.0px;letter-spacing:-0.23px">Мебель ComfortPlace</span></div>
<div class="r" style="top:898px;color:#8cb400"><div class="cb" style="top:19px"></div><span class="n" style="left:85.3px;letter-spacing:-0.75px">3052</span><span class="a" style="left:305.9px;letter-spacing:0.23px">30-07-2024 | 512 | Влада Чичикова</span><span class="b" style="left:1192.2px;letter-spacing:-0.28px">Успешно доставлено</span><span class="c" style="left:1642.0px;letter-spacing:-0.40px">Veronika Sokolova (@Sokolo...</span><span class="d" style="left:2092.0px;letter-spacing:-0.24px">Алексей Иванов</span><span class="e" style="left:2542.0px;letter-spacing:-0.07px">Цветочный магазин "Fl...</span></div>
<div class="r" style="top:973px;color:#8cb400"><div class="cb" style="top:19px"></div><span class="n" style="left:85.3px;letter-spacing:-0.75px">3051</span><span class="a" style="left:305.9px;letter-spacing:0.28px">31-07-2024 | 533 | Людмила Жданова</span><span class="b" style="left:1192.2px;letter-spacing:-0.28px">Успешно доставлено</span><span class="c" style="left:1642.0px;letter-spacing:-0.53px">Андрей Ковалев (@andrey_k...</span><span class="d" style="left:2092.0px;letter-spacing:-0.49px">Александра Евдокимова</span><span class="e" style="left:2542.0px;letter-spacing:-0.07px">Цветочный магазин "Fl...</span></div>
<div class="r" style="top:1047px;color:#ff8562"><div class="cb" style="top:19px"></div><span class="n" style="left:85.3px;letter-spacing:-0.75px">3049</span><span class="a" style="left:305.9px;letter-spacing:0.31px">31-07-2024 | 503 | Ирен Маслова</span><span class="b" style="left:1192.2px;letter-spacing:-0.27px">Оплачено, начата сборка</span><span class="c" style="left:1642.0px;letter-spacing:-0.25px">Егор Антонов (@egor_anton...</span><span class="d" style="left:2092.0px;letter-spacing:-0.24px">Алексей Иванов</span><span class="e" style="left:2542.0px;letter-spacing:-0.07px">Цветочный магазин "Fl...</span></div>
<div class="r" style="top:1121px;color:#f5a400"><div class="cb" style="top:19px"></div><span class="n" style="left:85.3px;letter-spacing:-0.75px">3048</span><span class="a" style="left:305.9px;letter-spacing:0.50px">31-07-2024 | 577 | Всеволод Горожанин</span><span class="b" style="left:1192.2px;letter-spacing:-0.61px">Ожидается оплата</span><span class="c" style="left:1642.0px;letter-spacing:-0.40px">Veronika Sokolova (@Sokolo...</span><span class="d" style="left:2092.0px;letter-spacing:-0.27px">Вероника Паномарева</span><span class="e" style="left:2542.0px;letter-spacing:-0.07px">Цветочный магазин "Fl...</span></div>
<div class="r" style="top:1195px;color:#f5a400"><div class="cb" style="top:19px"></div><span class="n" style="left:85.3px;letter-spacing:-0.75px">3047</span><span class="a" style="left:305.9px;letter-spacing:0.26px">01-08-2024 | 653 | Камила Юсупова</span><span class="b" style="left:1192.2px;letter-spacing:-0.61px">Ожидается оплата</span><span class="c" style="left:1642.0px;letter-spacing:-0.53px">Андрей Ковалев (@andrey_k...</span><span class="d" style="left:2092.0px;letter-spacing:-0.43px">Василий Петров</span><span class="e" style="left:2542.0px;letter-spacing:-0.07px">Цветочный магазин "Fl...</span></div>
<div class="r" style="top:1270px;color:#6cbcaa"><div class="cb" style="top:19px"></div><span class="n" style="left:85.3px;letter-spacing:-0.75px">3046</span><span class="a" style="left:305.9px;letter-spacing:0.42px">01-08-2024 | 623 | Константин Смирнов</span><span class="b" style="left:1192.2px;letter-spacing:-0.65px">Новая заявка</span><span class="c" style="left:1642.0px;letter-spacing:-0.53px">Андрей Ковалев (@andrey_k...</span><span class="d" style="left:2092.0px;letter-spacing:-0.49px">Александра Евдокимова</span><span class="e" style="left:2542.0px;letter-spacing:-0.07px">Цветочный магазин "Fl...</span></div>
<div class="r" style="top:1344px;color:#6cbcaa"><div class="cb" style="top:19px"></div><span class="n" style="left:85.3px;letter-spacing:-0.75px">3045</span><span class="a" style="left:305.9px;letter-spacing:0.34px">01-08-2024 | 673 | Алексей Воеводин</span><span class="b" style="left:1192.2px;letter-spacing:-0.65px">Новая заявка</span><span class="c" style="left:1642.0px;letter-spacing:-0.07px">Денис Филиппов (denis.filip...</span><span class="d" style="left:2092.0px;letter-spacing:-0.27px">Вероника Паномарева</span><span class="e" style="left:2542.0px;letter-spacing:-0.07px">Цветочный магазин "Fl...</span></div>
<div class="r" style="top:1418px;color:#77d977"><div class="cb" style="top:19px"></div><span class="n" style="left:84.9px;letter-spacing:-0.75px">2366</span><span class="a" style="left:305.9px;letter-spacing:0.34px">Обучение по этике и профессиональной ответствен...</span><span class="b" style="left:1192.2px;letter-spacing:-0.54px">В работе</span><span class="c" style="left:1642.0px;letter-spacing:-0.22px">Тимур Лебедев</span><span class="d" style="left:2092.0px;letter-spacing:-0.49px">Александра Евдокимова</span><span class="e" style="left:2542.0px;letter-spacing:0.08px">Бронь квартир</span></div>
<div class="r" style="top:1492px;color:#77d977"><div class="cb" style="top:19px"></div><span class="n" style="left:84.9px;letter-spacing:-0.75px">2365</span><span class="a" style="left:305.9px;letter-spacing:0.68px">Культура разнообразия и включения</span><span class="b" style="left:1192.2px;letter-spacing:-0.54px">В работе</span><span class="c" style="left:1642.0px;letter-spacing:-0.31px">Анастасия Ковальчук (nanat...</span><span class="d" style="left:2092.0px;letter-spacing:-0.27px">Вероника Паномарева</span><span class="e" style="left:2542.0px;letter-spacing:0.08px">Бронь квартир</span></div>
<div class="r" style="top:1567px;color:#2f74c8"><div class="cb" style="top:19px"></div><span class="n" style="left:84.9px;letter-spacing:-0.75px">2364</span><span class="a" style="left:305.9px;letter-spacing:0.45px">Стратегическое обучение лидеров</span><span class="b" style="left:1192.2px;letter-spacing:-0.54px">В работе</span><span class="c" style="left:1642.0px;letter-spacing:-0.32px">Виктор Захаров (victor.zakha...</span><span class="d" style="left:2092.0px;letter-spacing:-0.76px">Артур Афанасьев</span><span class="e" style="left:2542.0px;letter-spacing:-0.26px">Платежи</span></div>
<div class="r" style="top:1641px;color:#000080"><div class="cb" style="top:19px"></div><span class="n" style="left:84.9px;letter-spacing:-0.75px">2363</span><span class="a" style="left:305.9px;letter-spacing:0.74px">Обучение по вопросам безопасности</span><span class="b" style="left:1192.2px;letter-spacing:0.21px">Доработка инициатором</span><span class="c" style="left:1642.0px;letter-spacing:-0.07px">Денис Филиппов (denis.filip...</span><span class="d" style="left:2092.0px;letter-spacing:-0.38px">Родион Зайцев ("Гудлайф")</span><span class="e" style="left:2542.0px;letter-spacing:-0.22px">Согласование документ...</span></div>
<div class="hl" style="top:155px"></div>
<div class="hl" style="top:229px"></div>
<div class="hl" style="top:303px"></div>
<div class="hl" style="top:377px"></div>
<div class="hl" style="top:452px"></div>
<div class="hl" style="top:526px"></div>
<div class="hl" style="top:600px"></div>
<div class="hl" style="top:674px"></div>
<div class="hl" style="top:749px"></div>
<div class="hl" style="top:823px"></div>
<div class="hl" style="top:897px"></div>
<div class="hl" style="top:971px"></div>
<div class="hl" style="top:1046px"></div>
<div class="hl" style="top:1120px"></div>
<div class="hl" style="top:1194px"></div>
<div class="hl" style="top:1268px"></div>
<div class="hl" style="top:1343px"></div>
<div class="hl" style="top:1417px"></div>
<div class="hl" style="top:1491px"></div>
<div class="hl" style="top:1565px"></div>
<div class="hl" style="top:1640px"></div>
<div class="hl" style="top:1714px"></div>
<div id="thead"><div class="cb" style="top:24px;left:15px;border-color:#f0f0f0"></div>
<div class="th" style="left:86.2px;top:29px;width:26.0px;text-indent:-2.5px;transform-origin:0 0;transform:scaleX(1.203)">№</div>
<div class="th" style="left:307.0px;top:27px;width:126.7px;letter-spacing:0.78px;text-indent:-2.2px">Название</div>
<div class="th" style="left:1188.0px;top:29px;width:84.1px;letter-spacing:-0.41px;text-indent:-1.4px">Статус</div>
<div class="th" style="left:1638.6px;top:29px;width:149.4px;letter-spacing:0.87px;text-indent:-2.2px">Контрагент</div>
<div class="th" style="left:2088.8px;top:29px;width:177.0px;letter-spacing:1.09px;text-indent:-2.2px">Исполнители</div>
<div class="th" style="left:2538.2px;top:29px;width:97.7px;letter-spacing:0.87px;text-indent:-1.3px">Объект</div>
<svg class="abs" style="left:137px;top:40px;width:17px;height:23px" viewBox="0 0 17 23"><path d="M8.500 0V21 M1.500 14L8.500 21.500L15.500 14" fill="none" stroke="#222" stroke-width="1.700"/></svg>
<svg class="abs" style="left:1097px;top:25px;width:38px;height:37px" viewBox="0 0 38 37"><path d="M19 2L23.800 13.500L36 14.500L26.700 22.500L29.500 34.500L19 28.100L8.500 34.500L11.300 22.500L2 14.500L14.200 13.500Z" fill="none" stroke="#d9d9dc" stroke-width="1.600" stroke-linejoin="round"/></svg>
<svg class="abs" style="left:2948.1px;top:22.1px;width:40px;height:40px" viewBox="0 0 40 40"><path fill="#a9a9a9" fill-rule="evenodd" stroke="#a9a9a9" stroke-width="1" stroke-linejoin="round" d="M24.66 7.54L23.93 2.28L16.07 2.28L15.34 7.54L11.54 9.74L6.62 7.74L2.69 14.54L6.88 17.80L6.88 22.20L2.69 25.46L6.62 32.26L11.54 30.26L15.34 32.46L16.07 37.72L23.93 37.72L24.66 32.46L28.46 30.26L33.38 32.26L37.31 25.46L33.12 22.20L33.12 17.80L37.31 14.54L33.38 7.74L28.46 9.74Z M20 13.100A6.900 6.900 0 1 0 20 26.900A6.900 6.900 0 1 0 20 13.100Z"/></svg>
</div>
<div class="vl" style="left:200px"></div>
<div class="vl" style="left:1618px"></div>
<div class="vl" style="left:2068px"></div>
<div class="vl" style="left:2518px"></div>
<div class="abs" style="left:1166px;top:0;width:4px;height:1718px;background:#d4d4d6;box-shadow:3px 0 5px rgba(0,0,0,.07)"></div>
</div>
<div class="abs" style="left:3809px;top:573px;width:15px;height:1398px;border-radius:7.500px;background:#d6d7dc"></div>
</body></html>
